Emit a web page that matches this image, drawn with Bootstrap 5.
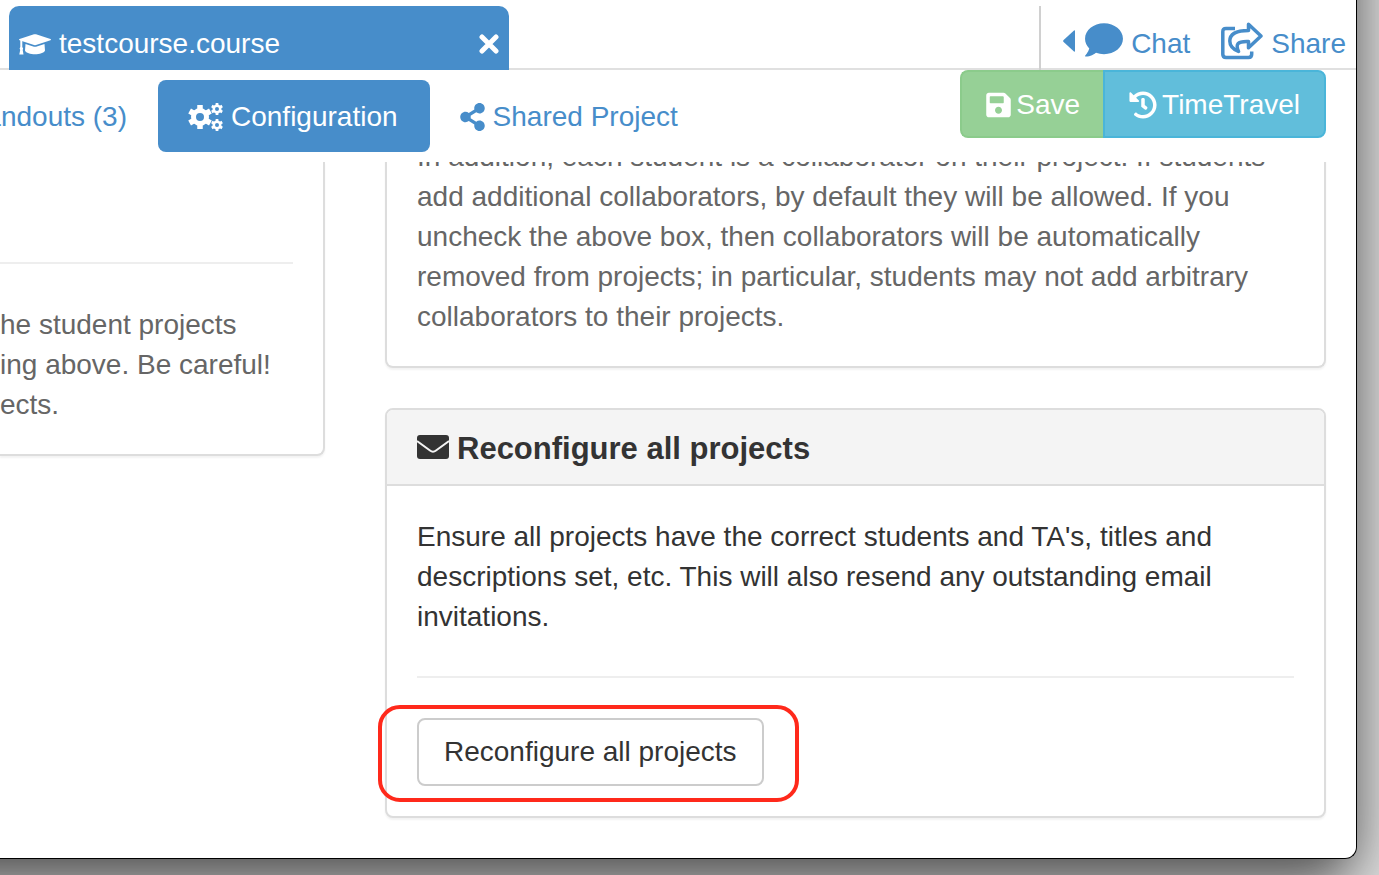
<!DOCTYPE html>
<html lang="en">
<head>
<meta charset="utf-8">
<meta name="viewport" content="width=device-width, initial-scale=1">
<title>testcourse.course</title>
<link href="https://cdn.jsdelivr.net/npm/bootstrap@5.3.0/dist/css/bootstrap.min.css" rel="stylesheet">
<style>
  body { background: #d8d8d8; color: #333; font: 28px/40px "Liberation Sans", Arial, sans-serif; min-height: 100vh; overflow: hidden; }
  a { color: #478dca; text-decoration: none; }
  svg { fill: currentColor; flex: none; display: block; }
  .app-window { background: #fff; margin-right: 22px; border: solid #000; border-width: 0 1px 1px 0; border-bottom-right-radius: 12px; box-shadow: -100px -75px 50px 100px rgba(0,0,0,.6); position: relative; }
  .file-bar { padding-top: 6px; height: 70px; box-shadow: inset 0 -2px #e0e0e0; }
  .file-tab { width: 500px; margin-left: 9px; padding: 12px 10px 0; background: #478dca; color: #fff; border-radius: 10px 10px 0 0; }
  .file-tab button { color: #fff; line-height: 0; }
  .bar-text { margin-top: 6px; }
  .file-tools { border-left: 2px solid #d0d0d0; padding: 12px 10px 0 22px; gap: 31px; }
  .file-tools a { gap: 8px; }
  .page-bar { height: 92px; }
  .page-bar nav { padding-top: 10px; }
  .page-bar .nav-link { height: 72px; padding: 2px 31px 0 30px; color: #478dca; border-radius: 8px; gap: 8px; }
  .page-bar .nav-link.active { background: #478dca; color: #fff; padding-right: 32px; }
  .page-bar .first-link { width: 158px; }
  .page-actions { margin-right: 30px; }
  .tool-btn { font-size: 28px; line-height: 40px; padding: 13px 24px 11px; border-width: 2px; border-radius: 8px; color: #fff; height: 68px; gap: 5px; }
  .tool-btn:hover { color: #fff; }
  .save-btn, .save-btn:disabled { background: #96d096; border-color: #8bcb8b; color: #fff; opacity: 1; border-right: 0; }
  .travel-btn, .travel-btn:hover { background: #61bedb; border-color: #4ab5d9; }
  .panels { display: grid; grid-template-columns: 325px minmax(0, 1fr); gap: 60px; padding: 0 30px 40px 0; overflow: hidden; }
  .panel-box { border: 2px solid #ddd; border-radius: 8px; box-shadow: 0 2px 2px rgba(0,0,0,.05); color: inherit; }
  .panel-box .card-body { padding: 31px 30px 30px; }
  .panel-box hr { margin: 39px 0 40px; border-top: 2px solid #eee; opacity: 1; }
  .muted { color: #666; }
  .open-top { border-top: 0; border-top-left-radius: 0; border-top-right-radius: 0; }
  .left-box { border-left: 0; border-bottom-left-radius: 0; }
  .left-box .card-body { padding: 100px 30px 29px 0; }
  .left-box hr { margin: 0 0 41px; }
  .collab-box { margin: -25px 0 40px; }
  .collab-box .card-body { padding: 0 30px 29px; }
  .panel-head { background: #f4f4f4; border-bottom: 2px solid #ddd; padding: 17px 30px; gap: 8px; border-radius: 6px 6px 0 0; }
  .panel-head h2 { font-size: 31px; line-height: 40px; font-weight: 700; padding-top: 2px; margin: 0 0 -2px; }
  .plain-btn { font-size: 28px; line-height: 40px; padding: 12px 25px; border: 2px solid #ccc; border-radius: 8px; color: #333; background: #fff; }
  .marker { position: absolute; inset: -13px -35px -16px -39px; border: 4px solid #ff291b; border-radius: 22px; pointer-events: none; }
</style>
</head>
<body>
<svg width="0" height="0" class="position-absolute" aria-hidden="true">
  <defs>
    <g id="cog">
      <circle r="6.5" fill="none" stroke="currentColor" stroke-width="5"/>
      <g stroke="currentColor" stroke-width="5.5"><path d="M0-7V-12M0 7V12"/><path d="M0-7V-12M0 7V12" transform="rotate(60)"/><path d="M0-7V-12M0 7V12" transform="rotate(120)"/></g>
    </g>
  </defs>
</svg>
<div class="app-window">
  <header class="file-bar d-flex">
    <div class="file-tab d-flex align-items-start">
      <svg class="me-2 mt-3" width="32" height="22" viewBox="0 0 32 22"><path d="M15 .300q1-.3 2 0L31.500 5q1 .6 0 1.200L17 11q-1 .3-2 0L.500 6.200q-1-.6 0-1.200z"/><path d="M6.500 10l8.500 2.700q1 .3 2 0L25.500 10l.5 6.500c-2 5-18 5-20 0zM1.300 6h2L3.300 13q1.500 1.500.4 3L4.500 20.500H.3L1.200 16q-1.200-1.500.1-3z"/></svg>
      <span class="bar-text">testcourse.course</span>
      <button type="button" class="btn border-0 p-0 ms-auto mt-3" aria-label="Close tab"><svg width="20" height="20" viewBox="0 0 20 20"><path d="M3 3l14 14M17 3L3 17" stroke="currentColor" stroke-width="5" stroke-linecap="round"/></svg></button>
    </div>
    <div class="file-tools d-flex ms-auto">
      <a href="#" class="d-flex">
        <svg class="mt-2 pt-1" width="14" height="26" viewBox="0 0 12 22" preserveAspectRatio="xMinYMid meet"><path d="M12 1v20q0 1-1 .5L.6 12Q-.3 11 .6 10L11 .5Q12 0 12 1z"/></svg>
        <svg class="mt-1" width="38" height="36" viewBox="0 0 512 486"><path d="M256 18C114.600 18 0 111.100 0 226c0 49.600 21.400 95 57 130.700C44.500 407.100 2.700 452 2.200 452.500c-2.200 2.300-2.800 5.700-1.500 8.700S4.800 466 8 466c66.300 0 116-31.800 140.600-51.400 32.700 12.300 69 19.400 107.400 19.400 141.400 0 256-93.100 256-208S397.400 18 256 18z"/></svg>
        <span class="bar-text">Chat</span>
      </a>
      <a href="#" class="d-flex">
        <svg class="mt-1" width="42" height="38" viewBox="0 0 42 38"><g fill="none" stroke="currentColor" stroke-width="3.500" stroke-linejoin="round"><path d="M14 6.500H5Q1.800 6.500 1.800 9.700v22.500q0 3.200 3.200 3.200H27.500q3.200 0 3.200-3.200V29.500"/><path d="M27.500 2.300L40 14 27.500 25.700V19.500C16 19 14.500 22.500 17.500 29.500 11.500 27 8.800 23 8.800 19 8.800 11.500 16 8.500 27.500 8.500z"/></g></svg>
        <span class="bar-text">Share</span>
      </a>
    </div>
  </header>
  <div class="page-bar d-flex overflow-hidden">
    <nav class="nav flex-nowrap">
      <a href="#" class="nav-link first-link d-flex align-items-center justify-content-end text-nowrap">Handouts (3)</a>
      <a href="#" class="nav-link active d-flex align-items-center" aria-current="page">
        <svg width="35" height="28" viewBox="0 0 35 28"><use href="#cog" x="12" y="14"/><use href="#cog" transform="translate(29 6) scale(.5)"/><use href="#cog" transform="translate(29 22) scale(.5)"/></svg>
        Configuration</a>
      <a href="#" class="nav-link d-flex align-items-center text-nowrap">
        <svg width="25" height="28" viewBox="0 0 448 512"><path d="M352 320c-22.608 0-43.387 7.819-59.790 20.895l-102.486-64.054a96.551 96.551 0 0 0 0-41.683l102.486-64.054C308.613 184.181 329.392 192 352 192c53.019 0 96-42.981 96-96S405.019 0 352 0s-96 42.981-96 96c0 7.158.79 14.130 2.276 20.841L155.790 180.895C139.387 167.819 118.608 160 96 160c-53.019 0-96 42.981-96 96s42.981 96 96 96c22.608 0 43.387-7.819 59.790-20.895l102.486 64.054A96.301 96.301 0 0 0 256 416c0 53.019 42.981 96 96 96s96-42.981 96-96-42.981-96-96-96z"/></svg>
        Shared Project</a>
    </nav>
    <div class="btn-group page-actions ms-auto align-self-start">
      <button type="button" class="btn tool-btn save-btn d-flex align-items-center" disabled>
        <svg width="25" height="28" viewBox="0 0 448 512"><path d="M433.941 129.941l-83.882-83.882A48 48 0 0 0 316.118 32H48C21.490 32 0 53.490 0 80v352c0 26.510 21.490 48 48 48h352c26.510 0 48-21.490 48-48V163.882a48 48 0 0 0-14.059-33.941zM224 416c-35.346 0-64-28.654-64-64 0-35.346 28.654-64 64-64s64 28.654 64 64c0 35.346-28.654 64-64 64zm96-304.520V212c0 6.627-5.373 12-12 12H76c-6.627 0-12-5.373-12-12V108c0-6.627 5.373-12 12-12h228.520c3.183 0 6.235 1.264 8.485 3.515l3.480 3.480A11.996 11.996 0 0 1 320 111.480z"/></svg>
        Save</button>
      <button type="button" class="btn tool-btn travel-btn d-flex align-items-center">
        <svg width="28" height="28" viewBox="0 0 512 512"><path d="M504 255.531c.253 136.640-111.180 248.372-247.820 248.468-59.015.042-113.223-20.530-155.822-54.911-11.077-8.940-11.905-25.541-1.839-35.607l11.267-11.267c8.609-8.609 22.353-9.551 31.891-1.984C173.062 425.135 212.781 440 256 440c101.705 0 184-82.311 184-184 0-101.705-82.311-184-184-184-48.814 0-93.149 18.969-126.068 49.932l50.754 50.754c10.080 10.080 2.941 27.314-11.313 27.314H24c-8.837 0-16-7.163-16-16V38.627c0-14.254 17.234-21.393 27.314-11.314l49.372 49.372C129.209 34.136 189.552 8 256 8c136.810 0 247.747 110.780 248 247.531zm-180.912 78.784l9.823-12.630c8.138-10.463 6.253-25.542-4.210-33.679L288 256.349V152c0-13.255-10.745-24-24-24h-16c-13.255 0-24 10.745-24 24v135.651l65.409 50.874c10.463 8.137 25.541 6.253 33.679-4.210z"/></svg>
        TimeTravel</button>
    </div>
  </div>
  <main class="panels">
    <section>
      <div class="card panel-box open-top left-box muted">
        <div class="card-body">
          <hr>
          <p class="mb-0">he student projects<br>ing above. Be careful!<br>ects.</p>
        </div>
      </div>
    </section>
    <section>
      <div class="card panel-box open-top collab-box muted">
        <div class="card-body">In addition, each student is a collaborator on their project. If students<br>add additional collaborators, by default they will be allowed. If you<br>uncheck the above box, then collaborators will be automatically<br>removed from projects; in particular, students may not add arbitrary<br>collaborators to their projects.</div>
      </div>
      <div class="card panel-box">
        <div class="panel-head d-flex align-items-center">
          <svg width="32" height="24" viewBox="0 0 32 24"><rect width="32" height="24" rx="3"/><path d="M0 6L13 15.500q3 2.400 6 0L32 6" fill="none" stroke="#f4f4f4" stroke-width="2"/></svg>
          <h2>Reconfigure all projects</h2>
        </div>
        <div class="card-body">
          <p class="mb-0">Ensure all projects have the correct students and TA's, titles and<br>descriptions set, etc. This will also resend any outstanding email<br>invitations.</p>
          <hr>
          <div class="position-relative d-inline-block align-top">
            <button type="button" class="btn plain-btn d-block">Reconfigure all projects</button>
            <div class="marker"></div>
          </div>
        </div>
      </div>
    </section>
  </main>
</div>
<script src="https://cdn.jsdelivr.net/npm/bootstrap@5.3.0/dist/js/bootstrap.bundle.min.js"></script>
</body>
</html>
